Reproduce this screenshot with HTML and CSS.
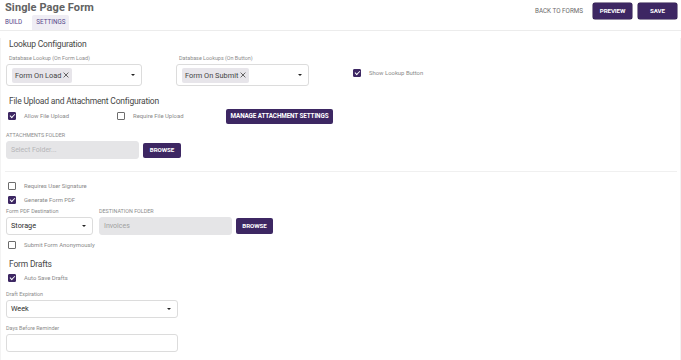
FILE: index.html
```html
<!DOCTYPE html>
<html lang="en">
<head>
    <meta charset="UTF-8">
    <meta name="viewport" content="width=device-width, initial-scale=1.0">
    <title>Single Page Form - Settings</title>
    <link rel="stylesheet" href="styles.css">
</head>
<body>
    <header class="topbar">
        <div class="topbar-left">
            <h1 class="page-title">Single Page Form</h1>
            <nav class="tabs">
                <span class="tab">Build</span>
                <span class="tab tab-active">Settings</span>
            </nav>
        </div>
        <div class="topbar-actions">
            <span class="link-btn">Back to Forms</span>
            <button class="btn btn-top">Preview</button>
            <button class="btn btn-top">Save</button>
        </div>
    </header>

    <main class="settings">
        <!-- Lookup -->
        <h2 class="section-title">Lookup Configuration</h2>
        <div class="row lookup-row">
            <div class="field field-lookup">
                <label class="field-label indent">Database Lookup (On Form Load)</label>
                <div class="select select-chips">
                    <span class="chip">Form On Load
                        <svg class="chip-x" viewBox="0 0 6 6"><path d="M0.6 0.6L5.4 5.4M5.4 0.6L0.6 5.4"/></svg>
                    </span>
                    <span class="caret"></span>
                </div>
            </div>
            <div class="field field-lookup-2">
                <label class="field-label indent">Database Lookups (On Button)</label>
                <div class="select select-chips">
                    <span class="chip">Form On Submit
                        <svg class="chip-x" viewBox="0 0 6 6"><path d="M0.6 0.6L5.4 5.4M5.4 0.6L0.6 5.4"/></svg>
                    </span>
                    <span class="caret"></span>
                </div>
            </div>
            <label class="check check-lookup">
                <span class="box checked"></span>Show Lookup Button
            </label>
        </div>

        <!-- Attachments -->
        <h2 class="section-title title-upload">File Upload and Attachment Configuration</h2>
        <div class="row upload-row">
            <label class="check check-allow"><span class="box checked"></span>Allow File Upload</label>
            <label class="check check-require"><span class="box"></span>Require File Upload</label>
            <button class="btn btn-manage">Manage Attachment Settings</button>
        </div>
        <label class="field-label caps label-folder">Attachments Folder</label>
        <div class="row">
            <div class="input input-disabled input-folder placeholder">Select Folder...</div>
            <button class="btn btn-browse">Browse</button>
        </div>

        <hr class="divider">

        <label class="check check-row check-first"><span class="box"></span>Requires User Signature</label>
        <label class="check check-row"><span class="box checked"></span>Generate Form PDF</label>
        <div class="row pdf-row">
            <div class="field field-dest">
                <label class="field-label">Form PDF Destination</label>
                <div class="select select-plain">Storage<span class="caret"></span></div>
            </div>
            <div class="field field-folder">
                <label class="field-label caps">Destination Folder</label>
                <div class="row">
                    <div class="input input-disabled input-dest">Invoices</div>
                    <button class="btn btn-browse btn-browse-2">Browse</button>
                </div>
            </div>
        </div>
        <label class="check check-row check-anon"><span class="box"></span>Submit Form Anonymously</label>

        <!-- Drafts -->
        <h2 class="section-title title-drafts">Form Drafts</h2>
        <label class="check check-row check-drafts"><span class="box checked"></span>Auto Save Drafts</label>
        <label class="field-label label-expire">Draft Expiration</label>
        <div class="select select-plain select-wide">Week<span class="caret"></span></div>
        <label class="field-label label-days">Days Before Reminder</label>
        <div class="input input-wide"></div>
    </main>
</body>
</html>
```

FILE: styles.css
```css
* {
    box-sizing: border-box;
}

body {
    margin: 0;
    padding: 0;
    width: 681px;
    height: 360px;
    background-color: #fff;
    font-family: Roboto, "Liberation Sans", Arial, sans-serif;
    color: #333;
    overflow: hidden;
}

/* top bar */
.topbar {
    height: 31px;
    display: flex;
    justify-content: space-between;
    border-bottom: 1px solid #ececec;
    padding: 0 4px 0 5px;
}

.page-title {
    margin: 0;
    font-size: 11px;
    line-height: 15px;
    font-weight: 700;
    color: #626262;
    letter-spacing: 0.1px;
}

.tabs {
    display: flex;
    gap: 7px;
    margin-left: -3px;
}

.tab {
    height: 15px;
    padding: 0 3px;
    font-size: 6.3px;
    line-height: 15px;
    font-weight: 400;
    text-transform: uppercase;
    color: #55478a;
    border-radius: 2px 2px 0 0;
}

.tab-active {
    background: #efedf4;
    padding: 0 4px;
}

.topbar-actions {
    display: flex;
    align-items: flex-start;
    padding-top: 3px;
    gap: 6px;
}

.link-btn {
    font-size: 6.3px;
    line-height: 16px;
    text-transform: uppercase;
    color: #6a6a6a;
    margin-right: 4px;
}

.btn {
    border: none;
    margin: 0;
    padding: 0;
    background: #3d2763;
    color: #fff;
    font-family: inherit;
    font-weight: 700;
    text-transform: uppercase;
    border-radius: 2px;
    font-size: 6.2px;
    letter-spacing: -0.1px;
}

.btn-top {
    width: 39px;
    height: 16px;
    box-shadow: 0 0 0 0.5px #2a1948;
}

/* content */
.settings {
    height: 329px;
    border: 1px solid #f3f3f3;
    border-top: none;
    padding: 0 0 0 5px;
}

.section-title {
    margin: 0;
    padding-left: 3px;
    font-size: 8.5px;
    line-height: 12px;
    font-weight: 400;
    letter-spacing: -0.2px;
    color: #474747;
}

.settings > .section-title:first-child {
    margin-top: 7px;
}

.row {
    display: flex;
    align-items: center;
}

.field {
    display: flex;
    flex-direction: column;
}

.field-label {
    display: block;
    font-size: 5.4px;
    line-height: 7px;
    color: #8c8c8c;
    margin-bottom: 2px;
}

.field-label.indent {
    padding-left: 3px;
}

.caps {
    text-transform: uppercase;
}

.select {
    position: relative;
    border: 1px solid #dcdcdc;
    border-radius: 3px;
    background: #fff;
}

.caret {
    position: absolute;
    right: 6px;
    top: 50%;
    margin-top: -1px;
    width: 0;
    height: 0;
    border-left: 2px solid transparent;
    border-right: 2px solid transparent;
    border-top: 2.5px solid #222;
}

/* lookup */
.lookup-row {
    margin-top: 5px;
    align-items: flex-end;
}

.field-lookup {
    width: 136px;
}

.field-lookup-2 {
    width: 133px;
    margin-left: 34px;
}

.select-chips {
    height: 22px;
    padding: 2px 5px;
    display: flex;
    align-items: center;
}

.chip {
    height: 15px;
    padding: 0 3px;
    background: #e7e5ea;
    border-radius: 2px;
    font-size: 7.4px;
    line-height: 15px;
    color: #454545;
    white-space: nowrap;
    display: flex;
    align-items: center;
}

.chip-x {
    width: 6px;
    height: 6px;
    margin-left: 2px;
    stroke: #555;
    stroke-width: 0.9;
    fill: none;
}

.check {
    display: flex;
    align-items: center;
    font-size: 5.9px;
    color: #8a8a8a;
}

.box {
    width: 8px;
    height: 8px;
    border: 1.3px solid #6d6d6d;
    border-radius: 1px;
    margin: 0 8px 0 2px;
    position: relative;
    flex: none;
}

.box.checked {
    background: #3d2763;
    border-color: #3d2763;
}

.box.checked::after {
    content: "";
    position: absolute;
    left: 1.3px;
    top: 1px;
    width: 3.5px;
    height: 2px;
    border-left: 1px solid #fff;
    border-bottom: 1px solid #fff;
    transform: rotate(-45deg);
}

.check-lookup {
    margin-left: 42px;
    height: 22px;
    margin-bottom: 2px;
}

/* upload */
.title-upload {
    margin-top: 9px;
}

.upload-row {
    margin-top: 1px;
    height: 16px;
}

.check-allow {
    width: 109px;
}

.check-require {
    width: 111px;
}

.btn-manage {
    width: 107px;
    height: 15px;
    font-size: 6.3px;
}

.label-folder {
    margin-top: 8px;
}

.input {
    height: 18px;
    border: 1px solid #dcdcdc;
    border-radius: 3px;
    background: #fff;
    font-size: 7px;
    line-height: 16px;
    padding-left: 4px;
}

.input-disabled {
    background: #e5e5e7;
    border-color: #e5e5e7;
    color: #a5a5a5;
}

.input-folder {
    width: 133px;
}

.placeholder {
    color: #b5b5b8;
}

.btn-browse {
    width: 38px;
    height: 15px;
    margin-left: 4px;
}

.divider {
    border: none;
    border-top: 1px solid #f0f0f0;
    margin: 12px 3px 0 -1px;
}

.check-row {
    height: 14px;
}

.check-first {
    margin-top: 7px;
}

.pdf-row {
    margin-top: 1px;
    align-items: flex-end;
}

.field-dest {
    width: 87px;
}

.select-plain {
    height: 18px;
    padding-left: 4px;
    font-size: 7.3px;
    line-height: 16px;
    color: #2e2e2e;
}

.field-folder {
    margin-left: 6px;
}

.input-dest {
    width: 133px;
    color: #a0a0a0;
}

.btn-browse-2 {
    width: 37px;
    height: 16px;
}

.check-anon {
    margin-top: 3px;
}

.title-drafts {
    margin-top: 6px;
}

.check-drafts {
    margin-top: 1px;
}

.label-expire {
    margin-top: 6px;
}

.select-wide {
    width: 172px;
}

.label-days {
    margin-top: 7px;
}

.input-wide {
    width: 172px;
}
```
